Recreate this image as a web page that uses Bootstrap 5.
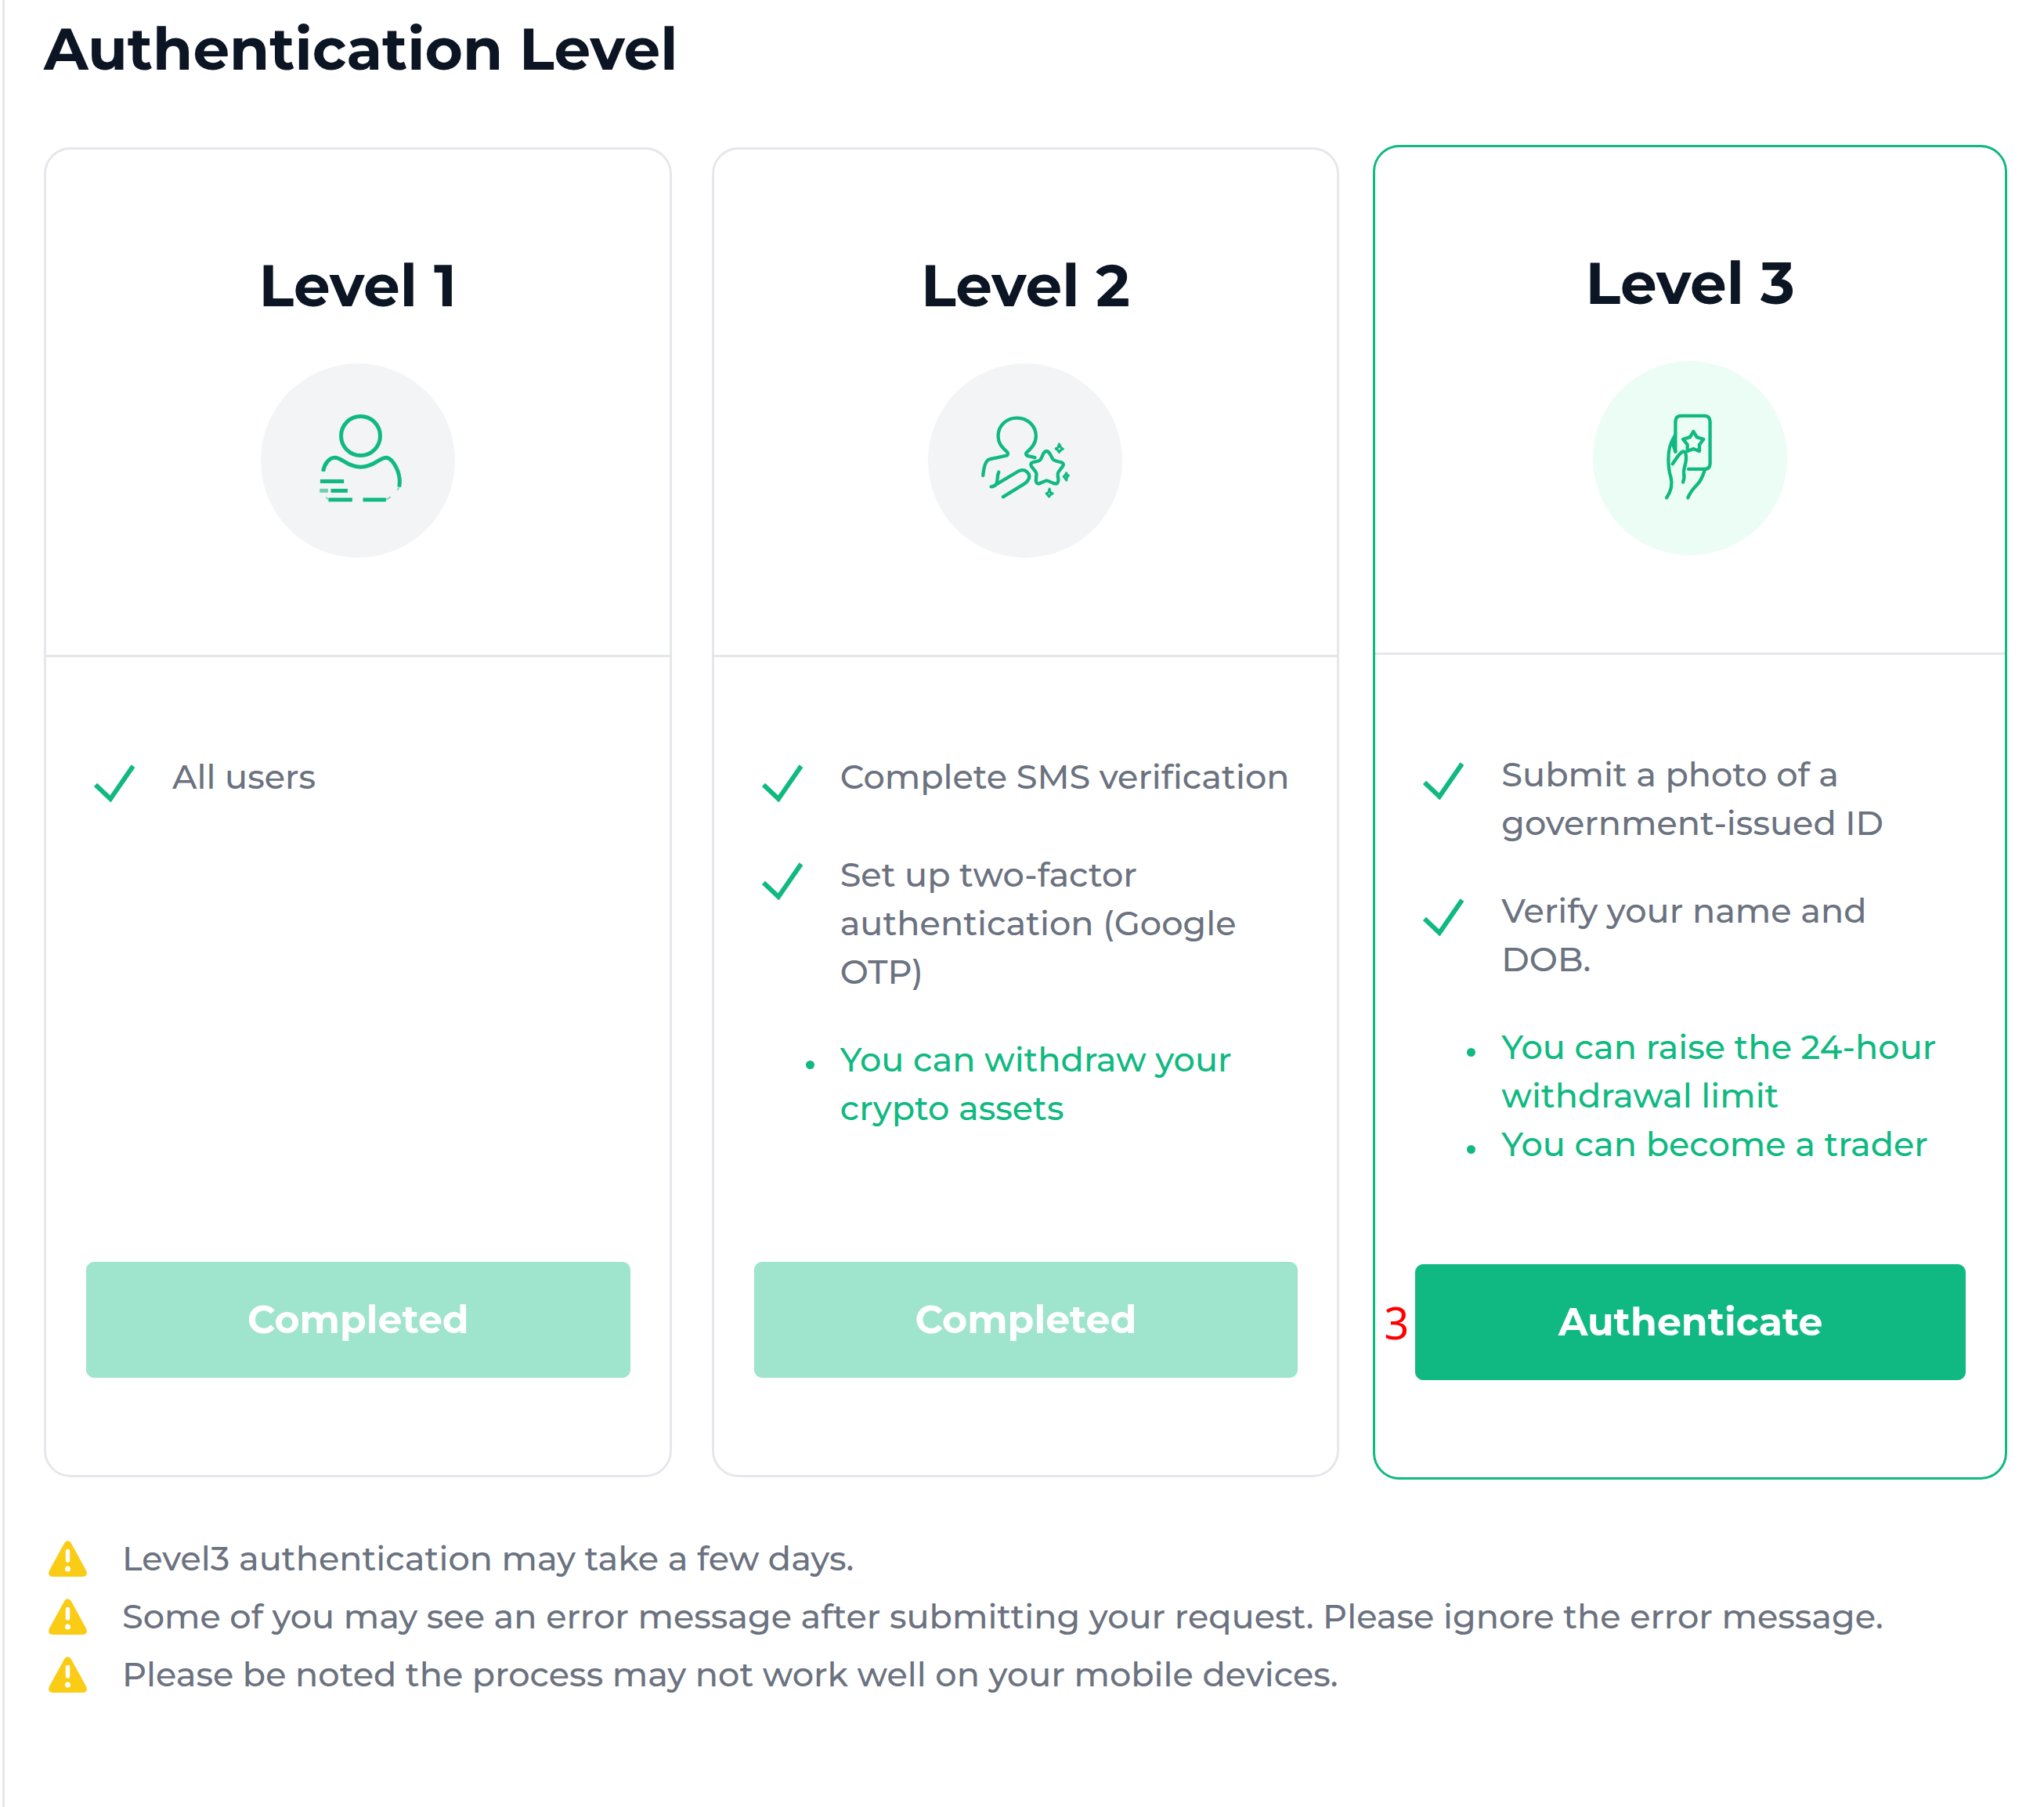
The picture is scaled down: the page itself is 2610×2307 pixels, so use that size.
<!DOCTYPE html>
<html lang="en">
<head>
<meta charset="utf-8">
<meta name="viewport" content="width=device-width, initial-scale=1">
<title>Authentication Level</title>
<link href="https://cdn.jsdelivr.net/npm/bootstrap@5.3.0/dist/css/bootstrap.min.css" rel="stylesheet">
<style>
  :root { --brand: #10b981; --line: #e5e7eb; --ink: #0b1523; --muted: #6b7280; }
  body { font-family: Montserrat, Inter, sans-serif; font-weight: 500; font-size: 43px; line-height: 62px; color: var(--muted); background: #fff; }
  .auth-page { margin-left: 3px; border-left: 3px solid var(--line); padding: 18px 47px 40px 50px; }
  .auth-title, .level-title { font-size: 74px; line-height: 90px; font-weight: 700; color: var(--ink); }
  .auth-title { margin-bottom: 80px; }
  .level-row { --bs-gutter-x: 51px; }
  .level-card { border: 3px solid var(--line); border-radius: 34px; height: 100%; }
  .level-card.featured { border-color: var(--brand); height: auto; flex-grow: 1; margin: -3px 0 -3px -8px; }
  .level-head { padding: 129px 24px 124px; border-bottom: 3px solid var(--line); }
  .level-icon { width: 248px; height: 248px; border-radius: 50%; background: #f3f4f6; margin-top: 54px; }
  .featured .level-icon { background: #ecfdf5; }
  .level-icon svg, .check svg { display: block; fill: none; stroke: var(--brand); }
  .level-body { padding: 122px 50px 124px 51px; }
  .level-items { gap: 50px; margin-bottom: 122px; }
  .level-item { min-height: 75px; gap: 48px; padding-left: 10px; }
  .check { padding-top: 15px; }
  .level-perks { padding-left: 110px; color: var(--brand); }
  .level-perks li { position: relative; }
  .level-perks li::before { content: ""; position: absolute; left: -44px; top: 32px; width: 11px; height: 11px; border-radius: 50%; background: var(--brand); }
  .level-btn { --bs-btn-color: #fff; --bs-btn-bg: var(--brand); --bs-btn-border-color: var(--brand); --bs-btn-hover-color: #fff; --bs-btn-hover-bg: #0ea371; --bs-btn-hover-border-color: #0ea371; --bs-btn-disabled-color: #fff; --bs-btn-disabled-bg: #9fe4cc; --bs-btn-disabled-border-color: #9fe4cc; --bs-btn-disabled-opacity: 1; --bs-btn-border-radius: 10px; --bs-btn-font-size: 49px; --bs-btn-font-weight: 700; --bs-btn-line-height: 62px; --bs-btn-padding-y: 42px; }
  .step-no { position: absolute; right: 100%; top: 50%; transform: translateY(-50%); margin-right: 8px; font-family: "Noto Sans", sans-serif; font-weight: 400; font-size: 56px; color: #f00; }
  .notes { margin-top: 67px; line-height: 74px; }
  .notes li { gap: 45px; padding-left: 6px; }
</style>
<script src="https://cdn.jsdelivr.net/npm/bootstrap@5.3.0/dist/js/bootstrap.bundle.min.js" defer></script>
</head>
<body>
<svg width="0" height="0" class="position-absolute" aria-hidden="true">
  <symbol id="tick" viewBox="0 0 52 48"><path d="M2 26 L21 44 L50 2" stroke-width="6"/></symbol>
  <symbol id="warn" viewBox="0 0 49 46">
    <path d="M20.500 2.500Q24.500-2 28.500 2.500L48 38Q51 46 43 46H6Q-2 46 1 38Z" fill="#facc15"/>
    <path d="M24.500 13.500V25" stroke="#fff" stroke-width="5.500" stroke-linecap="round"/>
    <circle cx="24.500" cy="36" r="3.500" fill="#fff"/>
  </symbol>
</svg>

<main class="auth-page min-vh-100">
  <h1 class="auth-title">Authentication Level</h1>

  <div class="row level-row">
    <section class="col-4">
      <div class="level-card d-flex flex-column">
        <div class="level-head text-center">
          <h2 class="level-title mb-0">Level 1</h2>
          <div class="level-icon mx-auto">
            <svg viewBox="40 40 745 745" stroke-width="15">
              <circle cx="423" cy="318" r="75"/>
              <path d="M279 454C284 425 302 401 324 401C352 401 372 437 423 437C474 437 494 401 522 401C548 405 580 462 571 513"/>
              <path d="M268 492H359M309 528H373M300 563H391M432 563H520"/>
              <path d="M266 528H298" opacity=".6"/>
              <path d="M571 513L564 526M520 563L538 552M300 563L290 553" stroke-width="6" opacity=".5"/>
            </svg>
          </div>
        </div>
        <div class="level-body d-flex flex-column flex-grow-1">
          <ul class="level-items list-unstyled d-flex flex-column">
            <li class="level-item d-flex"><span class="check"><svg width="52" height="48"><use href="#tick"/></svg></span><span>All users</span></li>
          </ul>
          <button type="button" class="btn level-btn w-100 mt-auto" disabled>Completed</button>
        </div>
      </div>
    </section>

    <section class="col-4">
      <div class="level-card d-flex flex-column">
        <div class="level-head text-center">
          <h2 class="level-title mb-0">Level 2</h2>
          <div class="level-icon mx-auto">
            <svg viewBox="40 40 745 745" stroke-width="13" stroke-linejoin="round" stroke-linecap="round">
              <path d="M251 470C254 436 262 410 278 407L343 393Q350 387 343 379C319 358 309 343 309 318C309 278 341 249 381 249C423 249 454 280 454 319C454 346 438 364 417 383Q413 391 423 395L450 401"/>
              <path d="M311 457C304 472 309 488 302 502M282 513Q292 513 302 504L387 453C415 440 436 465 425 485Q420 496 406 504L328 552"/>
              <path d="M483 384Q495 369 506 384L518 406Q522 412 531 414L553 420Q563 425 557 434L540 457Q536 463 538 471L540 487Q540 505 522 500L501 491Q495 488 489 491L466 501Q455 502 454 489L456 466Q456 459 451 453L436 434Q431 422 443 419L464 414Q470 412 474 405Z"/>
              <path d="M543 349L550 363L558 368L548 373L543 381L537 372L530 367L539 362ZM570 460L574 468L579 470L573 476L571 488L564 478L560 474L567 468ZM506 521L509 534L518 539L510 543L504 551L499 544L494 539L502 534Z" stroke-width="9"/>
            </svg>
          </div>
        </div>
        <div class="level-body d-flex flex-column flex-grow-1">
          <ul class="level-items list-unstyled d-flex flex-column">
            <li class="level-item d-flex"><span class="check"><svg width="52" height="48"><use href="#tick"/></svg></span><span>Complete SMS verification</span></li>
            <li class="level-item d-flex"><span class="check"><svg width="52" height="48"><use href="#tick"/></svg></span><span>Set up two-factor<br>authentication (Google<br>OTP)</span></li>
            <li><ul class="level-perks list-unstyled"><li>You can withdraw your<br>crypto assets</li></ul></li>
          </ul>
          <button type="button" class="btn level-btn w-100 mt-auto" disabled>Completed</button>
        </div>
      </div>
    </section>

    <section class="col-4 d-flex">
      <div class="level-card featured d-flex flex-column">
        <div class="level-head text-center">
          <h2 class="level-title mb-0">Level 3</h2>
          <div class="level-icon mx-auto">
            <svg viewBox="47 45 746 746" stroke-width="13" stroke-linejoin="round" stroke-linecap="round">
              <path d="M364 393V278Q364 255 387 255H474Q497 255 497 278V438Q497 460 474 460H414"/>
              <path d="M361 333C346 356 337 378 337 420C337 452 340 472 346 490C354 519 348 544 330 570M357 345V372L364 393"/>
              <path d="M353 440C367 420 379 397 393 392Q406 391 405 420C404 446 394 457 396 475Q400 493 393 510"/>
              <path d="M476 464C469 488 462 505 446 521C430 537 419 552 412 570"/>
              <path d="M433 315L446 337L472 345L456 366L456 391L433 382L410 391L410 366L393 345L420 337Z"/>
            </svg>
          </div>
        </div>
        <div class="level-body d-flex flex-column flex-grow-1">
          <ul class="level-items list-unstyled d-flex flex-column">
            <li class="level-item d-flex"><span class="check"><svg width="52" height="48"><use href="#tick"/></svg></span><span>Submit a photo of a<br>government-issued ID</span></li>
            <li class="level-item d-flex"><span class="check"><svg width="52" height="48"><use href="#tick"/></svg></span><span>Verify your name and<br>DOB.</span></li>
            <li><ul class="level-perks list-unstyled"><li>You can raise the 24-hour<br>withdrawal limit</li><li>You can become a trader</li></ul></li>
          </ul>
          <div class="position-relative mt-auto">
            <span class="step-no">3</span>
            <button type="button" class="btn level-btn w-100">Authenticate</button>
          </div>
        </div>
      </div>
    </section>
  </div>

  <ul class="notes list-unstyled mb-0">
    <li class="d-flex align-items-center"><svg class="flex-shrink-0" width="49" height="46"><use href="#warn"/></svg><span>Level3 authentication may take a few days.</span></li>
    <li class="d-flex align-items-center"><svg class="flex-shrink-0" width="49" height="46"><use href="#warn"/></svg><span>Some of you may see an error message after submitting your request. Please ignore the error message.</span></li>
    <li class="d-flex align-items-center"><svg class="flex-shrink-0" width="49" height="46"><use href="#warn"/></svg><span>Please be noted the process may not work well on your mobile devices.</span></li>
  </ul>
</main>
</body>
</html>
